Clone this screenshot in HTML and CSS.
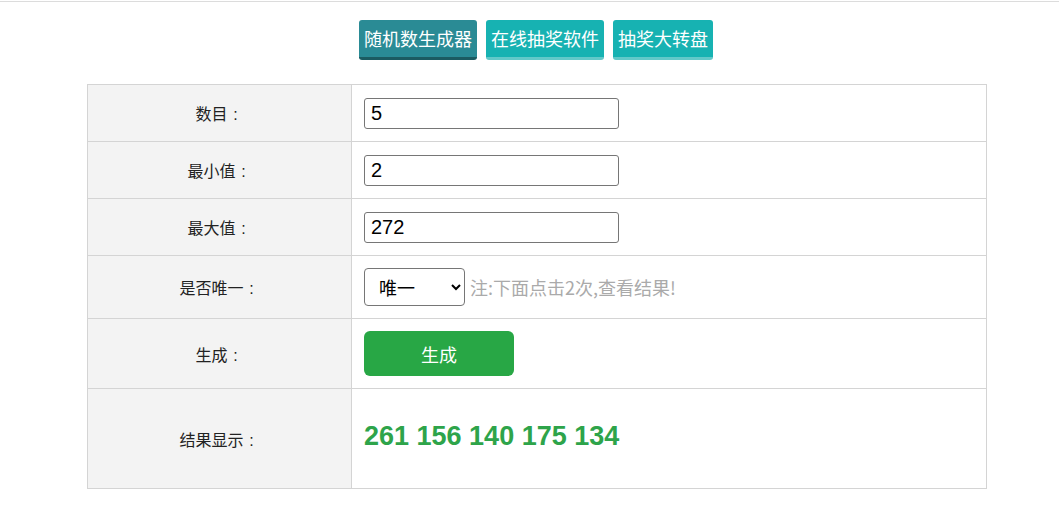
FILE: index.html
```html
<!DOCTYPE html>
<html lang="zh-CN">
<head>
<meta charset="utf-8">
<title>随机数生成器</title>
<link rel="stylesheet" href="styles.css">
</head>
<body>
<div class="topline"></div>
<div class="page">
  <nav class="tabs">
    <a class="tab tab-active">随机数生成器</a>
    <a class="tab">在线抽奖软件</a>
    <a class="tab">抽奖大转盘</a>
  </nav>
  <table class="form">
    <tr class="r-input">
      <td class="label">数目<span class="colon">:</span></td>
      <td class="field"><input class="num" type="text" value="5"></td>
    </tr>
    <tr class="r-input">
      <td class="label">最小值<span class="colon">:</span></td>
      <td class="field"><input class="num" type="text" value="2"></td>
    </tr>
    <tr class="r-input">
      <td class="label">最大值<span class="colon">:</span></td>
      <td class="field"><input class="num" type="text" value="272"></td>
    </tr>
    <tr class="r-select">
      <td class="label">是否唯一<span class="colon">:</span></td>
      <td class="field">
        <div class="inline">
          <select class="sel"><option>唯一</option><option>不唯一</option></select>
          <span class="note">注:下面点击2次,查看结果!</span>
        </div>
      </td>
    </tr>
    <tr class="r-btn">
      <td class="label">生成<span class="colon">:</span></td>
      <td class="field"><button class="gen">生成</button></td>
    </tr>
    <tr class="r-result">
      <td class="label">结果显示<span class="colon">:</span></td>
      <td class="field"><span class="result">261 156 140 175 134</span></td>
    </tr>
  </table>
</div>
</body>
</html>
```
FILE: styles.css
```css
html, body {
  margin: 0;
  padding: 0;
  background: #fff;
}
body {
  font-family: "Noto Sans CJK SC", "Liberation Sans", sans-serif;
  color: #222;
}
.topline {
  height: 1px;
  margin-top: 1px;
  background: #dcdcdc;
}
.page {
  padding-left: 13px;
}
.tabs {
  display: flex;
  justify-content: center;
  gap: 9px;
  padding-top: 18px;
}
.tab {
  display: block;
  box-sizing: border-box;
  height: 40px;
  padding: 0 5px;
  font-size: 18px;
  line-height: 37px;
  color: #fff;
  background: #17b2b2;
  border-radius: 3px;
  border-bottom: 3px solid #62c9c9;
  cursor: pointer;
}
.tab-active {
  background: #2a8b95;
  border-bottom-color: #1b5b61;
}
.form {
  margin: 24px 0 0 74px;
  width: 900px;
  border-collapse: collapse;
  font-size: 16px;
}
.form td {
  border: 1px solid #d4d4d4;
  padding: 0;
  vertical-align: middle;
}
.label {
  width: 263px;
  background: #f3f3f3;
  text-align: center;
  color: #222;
}
.colon {
  display: inline-block;
  width: 16px;
  text-align: center;
  font-family: "Liberation Sans", sans-serif;
}
.field {
  padding-left: 12px !important;
  background: #fff;
}
.r-input td { height: 56px; }
.r-select td { height: 62px; }
.r-btn td { height: 69px; }
.r-result td { height: 99px; }
.num {
  box-sizing: border-box;
  display: block;
  width: 255px;
  height: 31px;
  border: 1px solid #767676;
  border-radius: 3px;
  padding: 0 6px;
  font-family: "Liberation Sans", Arial, sans-serif;
  font-size: 20px;
  color: #000;
}
.inline {
  display: flex;
  align-items: center;
  gap: 5px;
}
.sel {
  box-sizing: border-box;
  width: 101px;
  height: 38px;
  border: 1px solid #767676;
  border-radius: 4px;
  padding-left: 10px;
  font-family: "Noto Sans CJK SC", sans-serif;
  font-size: 18px;
  color: #000;
  background: #fff;
}
.note {
  font-size: 18px;
  color: #aaa;
}
.gen {
  display: block;
  width: 150px;
  height: 45px;
  border: none;
  border-radius: 6px;
  background: #28a745;
  color: #fff;
  font-family: "Noto Sans CJK SC", sans-serif;
  font-size: 18px;
  cursor: pointer;
}
.result {
  font-family: "Liberation Sans", Arial, sans-serif;
  font-weight: bold;
  font-size: 27px;
  color: #2ea44a;
  position: relative;
  top: -2px;
}
```
